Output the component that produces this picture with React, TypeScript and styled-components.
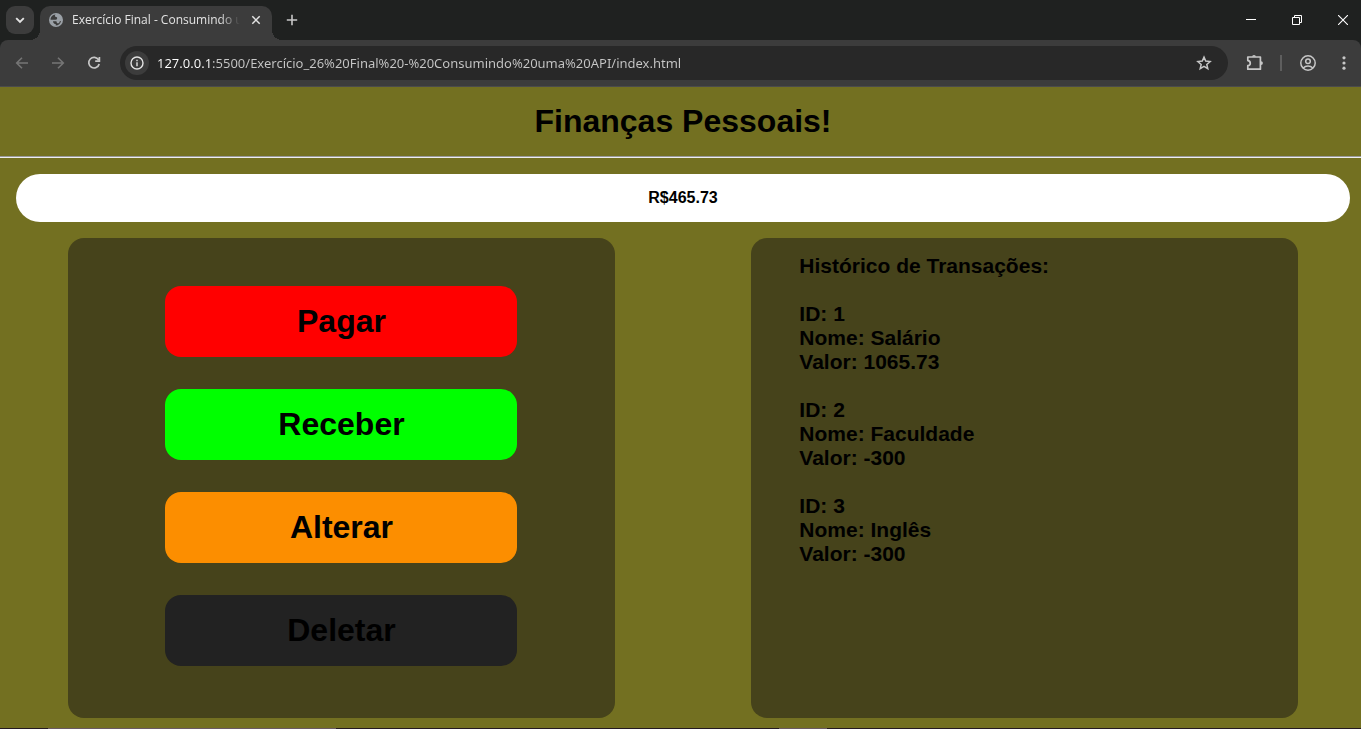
import React from "react";
import styled, { createGlobalStyle } from "styled-components";

const GlobalStyle = createGlobalStyle`
  * { box-sizing: border-box; }
  body {
    margin: 0;
    background: #737021;
    font-family: "Liberation Sans", Arial, sans-serif;
    color: #000;
    overflow-x: hidden;
  }
`;

const Screen = styled.div`
  display: flex;
  flex-direction: column;
  min-height: 100vh;
  overflow: hidden;
`;

const TabStrip = styled.div`
  display: flex;
  align-items: flex-end;
  height: 40px;
  padding-left: 6px;
  background: #1f2120;
  color: #e3e3e3;
`;

const IconButton = styled.button<{ $size?: number; $bg?: string; $radius?: number; $color?: string }>`
  display: flex;
  align-items: center;
  justify-content: center;
  flex: none;
  width: ${(p) => p.$size ?? 28}px;
  height: ${(p) => p.$size ?? 28}px;
  padding: 0;
  border: 0;
  border-radius: ${(p) => p.$radius ?? 14}px;
  background: ${(p) => p.$bg ?? "transparent"};
  color: ${(p) => p.$color ?? "#c7c7c7"};
`;

const TabSearch = styled(IconButton)`
  margin-bottom: 6px;
`;

const Tab = styled.div`
  position: relative;
  display: flex;
  align-items: center;
  width: 232px;
  height: 34px;
  margin-left: 6px;
  padding: 0 8px 6px;
  border-radius: 10px 10px 0 0;
  background: #3c3c3c;

  &::before,
  &::after {
    content: "";
    position: absolute;
    bottom: 0;
    width: 10px;
    height: 10px;
  }
  &::before {
    right: 100%;
    background: radial-gradient(circle at 0 0, transparent 10px, #3c3c3c 10px);
  }
  &::after {
    left: 100%;
    background: radial-gradient(circle at 100% 0, transparent 10px, #3c3c3c 10px);
  }
`;

const TabTitle = styled.span`
  flex: 1;
  min-width: 0;
  margin: 0 8px;
  overflow: hidden;
  white-space: nowrap;
  font: 12px/16px "Open Sans", "Segoe UI", sans-serif;
  color: #e3e3e3;
  mask-image: linear-gradient(to right, #000 88%, transparent);
`;

const NewTab = styled(IconButton)`
  margin: 0 0 6px 6px;
`;

const WindowControls = styled.div`
  display: flex;
  align-self: stretch;
  margin-left: auto;
`;

const WindowButton = styled.button`
  display: flex;
  align-items: center;
  justify-content: center;
  width: 46px;
  height: 40px;
  padding: 0;
  border: 0;
  background: none;
  color: #fff;
  &:last-child { margin-right: -5px; }
`;

const ToolbarBack = styled.div`
  background: #1f2120;
`;

const Toolbar = styled.div`
  display: flex;
  align-items: center;
  height: 47px;
  padding: 0 3px 0 8px;
  gap: 8px;
  border-bottom: 1px solid #4b4b4b;
  border-radius: 8px 8px 0 0;
  background: #3c3c3c;
`;

const AddressBar = styled.div`
  display: flex;
  align-items: center;
  flex: 1;
  min-width: 0;
  height: 34px;
  margin-left: 4px;
  padding: 0 10px 0 5px;
  border-radius: 17px;
  background: #282828;
`;

const Address = styled.input`
  flex: 1;
  min-width: 0;
  margin-left: 8px;
  padding: 0;
  border: 0;
  outline: 0;
  font: 13px/20px "Noto Sans", "Segoe UI", sans-serif;
  color: transparent;
  background: linear-gradient(to right, #fff 55px, #c7c7c7 55px);
  background-clip: text;
`;

const ToolbarEnd = styled.div`
  display: flex;
  align-items: center;
  gap: 4px;
  margin-left: 5px;
`;

const Separator = styled.span`
  width: 2px;
  height: 16px;
  margin: 0 8px 0 7px;
  background: #5e5e5e;
`;

const MenuButton = styled(IconButton)`
  margin-left: 4px;
`;

/* The content is as wide as the maximised window, whose right border lies off screen. */
const Page = styled.main`
  display: flex;
  flex-direction: column;
  flex: 1;
  width: calc(100% + 5px);
  padding-bottom: 10px;
`;

const Title = styled.h1`
  margin: 16px 0;
  font-size: 32px;
  line-height: 37px;
  text-align: center;
`;

const Rule = styled.hr`
  width: 100%;
  margin: 0;
  border: 0;
  border-top: 1px solid #9a9a9a;
  border-bottom: 1px solid #eee;
`;

const Balance = styled.section`
  margin: 16px;
  padding: 15px 16px;
  border-radius: 24px;
  background: #fff;
  font-size: 16px;
  font-weight: bold;
  line-height: 18px;
  text-align: center;
`;

const Columns = styled.div`
  display: flex;
  flex: 1;
  justify-content: space-around;
`;

const Panel = styled.section`
  width: 40%;
  min-height: 480px;
  border-radius: 16px;
  background: #46431b;
`;

const Actions = styled(Panel)`
  display: flex;
  flex-direction: column;
  align-items: center;
  gap: 32px;
  padding: 48px;
`;

const ActionButton = styled.button<{ $color: string }>`
  width: 352px;
  max-width: 100%;
  padding: 17px 16px;
  border: 0;
  border-radius: 16px;
  background: ${(p) => p.$color};
  color: #000;
  font: bold 32px/37px "Liberation Sans", Arial, sans-serif;
`;

const History = styled(Panel)`
  padding: 16px 48px;
  font-size: 21px;
  font-weight: bold;
  line-height: 24px;
`;

const HistoryTitle = styled.h2`
  margin: 0;
  font-size: 21px;
  line-height: 24px;
`;

const Transactions = styled.ul`
  display: flex;
  flex-direction: column;
  gap: 24px;
  margin: 24px 0 0;
  padding: 0;
  list-style: none;
`;

const Line = styled.div``;

const TaskbarEdge = styled.div`
  display: flex;
  height: 1px;
  background: #241a22;
`;

const TaskbarItem = styled.span<{ $left: number; $width: number }>`
  width: ${(p) => p.$width}px;
  margin-left: ${(p) => p.$left}px;
  background: #6a5a62;
`;

const Svg = ({ size = 16, sw = 1.6, children }: { size?: number; sw?: number; children: React.ReactNode }) => (
  <svg width={size} height={size} viewBox={`0 0 ${size} ${size}`} fill="none" stroke="currentColor" strokeWidth={sw} aria-hidden="true">
    {children}
  </svg>
);

const actions = [
  { label: "Pagar", color: "#ff0000" },
  { label: "Receber", color: "#00ff00" },
  { label: "Alterar", color: "#fc8e00" },
  { label: "Deletar", color: "#222222" },
];

const transactions = [
  { id: 1, nome: "Salário", valor: "1065.73" },
  { id: 2, nome: "Faculdade", valor: "-300" },
  { id: 3, nome: "Inglês", valor: "-300" },
];

export default function App() {
  return (
    <>
      <GlobalStyle />
      <Screen>
        <TabStrip>
          <TabSearch $bg="#3c3c3c" $radius={9} $color="#e3e3e3" aria-label="Pesquisar guias">
            <Svg sw={1.9}><path d="M4.2 6.2 8 10l3.800-3.800" /></Svg>
          </TabSearch>
          <Tab>
            <Svg size={16}>
              <circle cx="8" cy="8" r="7" fill="#9aa0a6" stroke="none" />
              <path d="M7.6 2.4C6.4 3.4 6.8 4.6 8.2 5c1 .2 1 .9.9 1.6C9 7.500 8.600 7.700 7.600 7.800H2.600C2.400 5 4.500 2.500 7.600 2.400ZM5 9.200h2.500c1 0 1.300.5 1.300 1.200s.6.9 1.200.9c.9 0 1.400-.6 1.500-1.300.1-.6.600-1 1.500-1-.5 2.700-2.500 4.600-5.300 4.600v-1.500C6.500 12 5 11 5 9.200Z" fill="#3c3c3c" stroke="none" />
            </Svg>
            <TabTitle>Exercício Final - Consumindo uma API</TabTitle>
            <IconButton $size={16} $color="#e3e3e3" aria-label="Fechar guia">
              <Svg sw={1.5}><path d="m4.300 4.300 7.400 7.400m0-7.400-7.400 7.400" /></Svg>
            </IconButton>
          </Tab>
          <NewTab aria-label="Nova guia">
            <Svg sw={1.6}><path d="M8 2.800v10.400M2.800 8h10.400" /></Svg>
          </NewTab>
          <WindowControls>
            <WindowButton aria-label="Minimizar">
              <Svg size={10} sw={1}><path d="M0 4.500h10" /></Svg>
            </WindowButton>
            <WindowButton aria-label="Restaurar">
              <Svg size={10} sw={1}><path d="M.5 2.500h7v7h-7zM2.500 2.500v-2h7v7h-2" /></Svg>
            </WindowButton>
            <WindowButton aria-label="Fechar">
              <Svg size={10} sw={1.1}><path d="m0 0 10 10M10 0 0 10" /></Svg>
            </WindowButton>
          </WindowControls>
        </TabStrip>

        <ToolbarBack>
          <Toolbar>
            <IconButton $color="#757575" aria-label="Voltar">
              <Svg><path d="M14 8H3M8 2.700 2.700 8 8 13.300" /></Svg>
            </IconButton>
            <IconButton $color="#757575" aria-label="Avançar">
              <Svg><path d="M2 8h11M8 2.700 13.300 8 8 13.300" /></Svg>
            </IconButton>
            <IconButton aria-label="Recarregar">
              <Svg sw={1.7}><path d="M12.600 4.900A5.300 5.300 0 1 0 13.200 9M13.400 2v4.200H9.200" /></Svg>
            </IconButton>
            <AddressBar>
              <IconButton $size={24} $bg="#3c3c3c" $color="#e3e3e3" aria-label="Informações do site">
                <Svg sw={1.4}><circle cx="8" cy="8" r="6" /><path d="M8 7.300v4M8 4.700v1.500" /></Svg>
              </IconButton>
              <Address
                aria-label="Endereço"
                spellCheck={false}
                defaultValue="127.0.0.1:5500/Exercício_26%20Final%20-%20Consumindo%20uma%20API/index.html"
              />
              <IconButton aria-label="Adicionar aos favoritos">
                <Svg size={18} sw={1.5}><path d="m9 3.100 1.700 4 4.400.4-3.300 2.900 1 4.300L9 12.400l-3.800 2.300 1-4.300-3.300-2.900 4.400-.4Z" /></Svg>
              </IconButton>
            </AddressBar>
            <ToolbarEnd>
              <IconButton aria-label="Extensões">
                <Svg size={18} sw={1.700}>
                  <path d="M1.800 3h12.600v12.200H1.800v-3.500c3.300-.4 3.300-4.700 0-5.100Z" strokeLinejoin="round" />
                  <path d="M6.100 2.800a1.900 1.900 0 0 1 3.800 0ZM15 7.200a1.900 1.900 0 0 1 0 3.800Z" fill="currentColor" stroke="none" />
                </Svg>
              </IconButton>
              <Separator />
              <IconButton aria-label="Perfil">
                <Svg size={18} sw={1.5}>
                  <circle cx="9" cy="9" r="7.200" />
                  <circle cx="9" cy="7.200" r="2.300" />
                  <path d="M4.200 14c2.600-2.600 7-2.600 9.600 0" />
                </Svg>
              </IconButton>
              <MenuButton aria-label="Menu">
                <Svg>
                  <g fill="currentColor" stroke="none">
                    <circle cx="8" cy="2.800" r="1.600" /><circle cx="8" cy="8" r="1.600" /><circle cx="8" cy="13.200" r="1.600" />
                  </g>
                </Svg>
              </MenuButton>
            </ToolbarEnd>
          </Toolbar>
        </ToolbarBack>

        <Page>
          <Title>Finanças Pessoais!</Title>
          <Rule />
          <Balance>R$465.73</Balance>
          <Columns>
            <Actions>
              {actions.map((a) => (
                <ActionButton key={a.label} $color={a.color}>{a.label}</ActionButton>
              ))}
            </Actions>
            <History>
              <HistoryTitle>Histórico de Transações:</HistoryTitle>
              <Transactions>
                {transactions.map((t) => (
                  <li key={t.id}>
                    <Line>ID: {t.id}</Line>
                    <Line>Nome: {t.nome}</Line>
                    <Line>Valor: {t.valor}</Line>
                  </li>
                ))}
              </Transactions>
            </History>
          </Columns>
        </Page>
        <TaskbarEdge>
          <TaskbarItem $left={48} $width={288} />
          <TaskbarItem $left={443} $width={48} />
        </TaskbarEdge>
      </Screen>
    </>
  );
}
